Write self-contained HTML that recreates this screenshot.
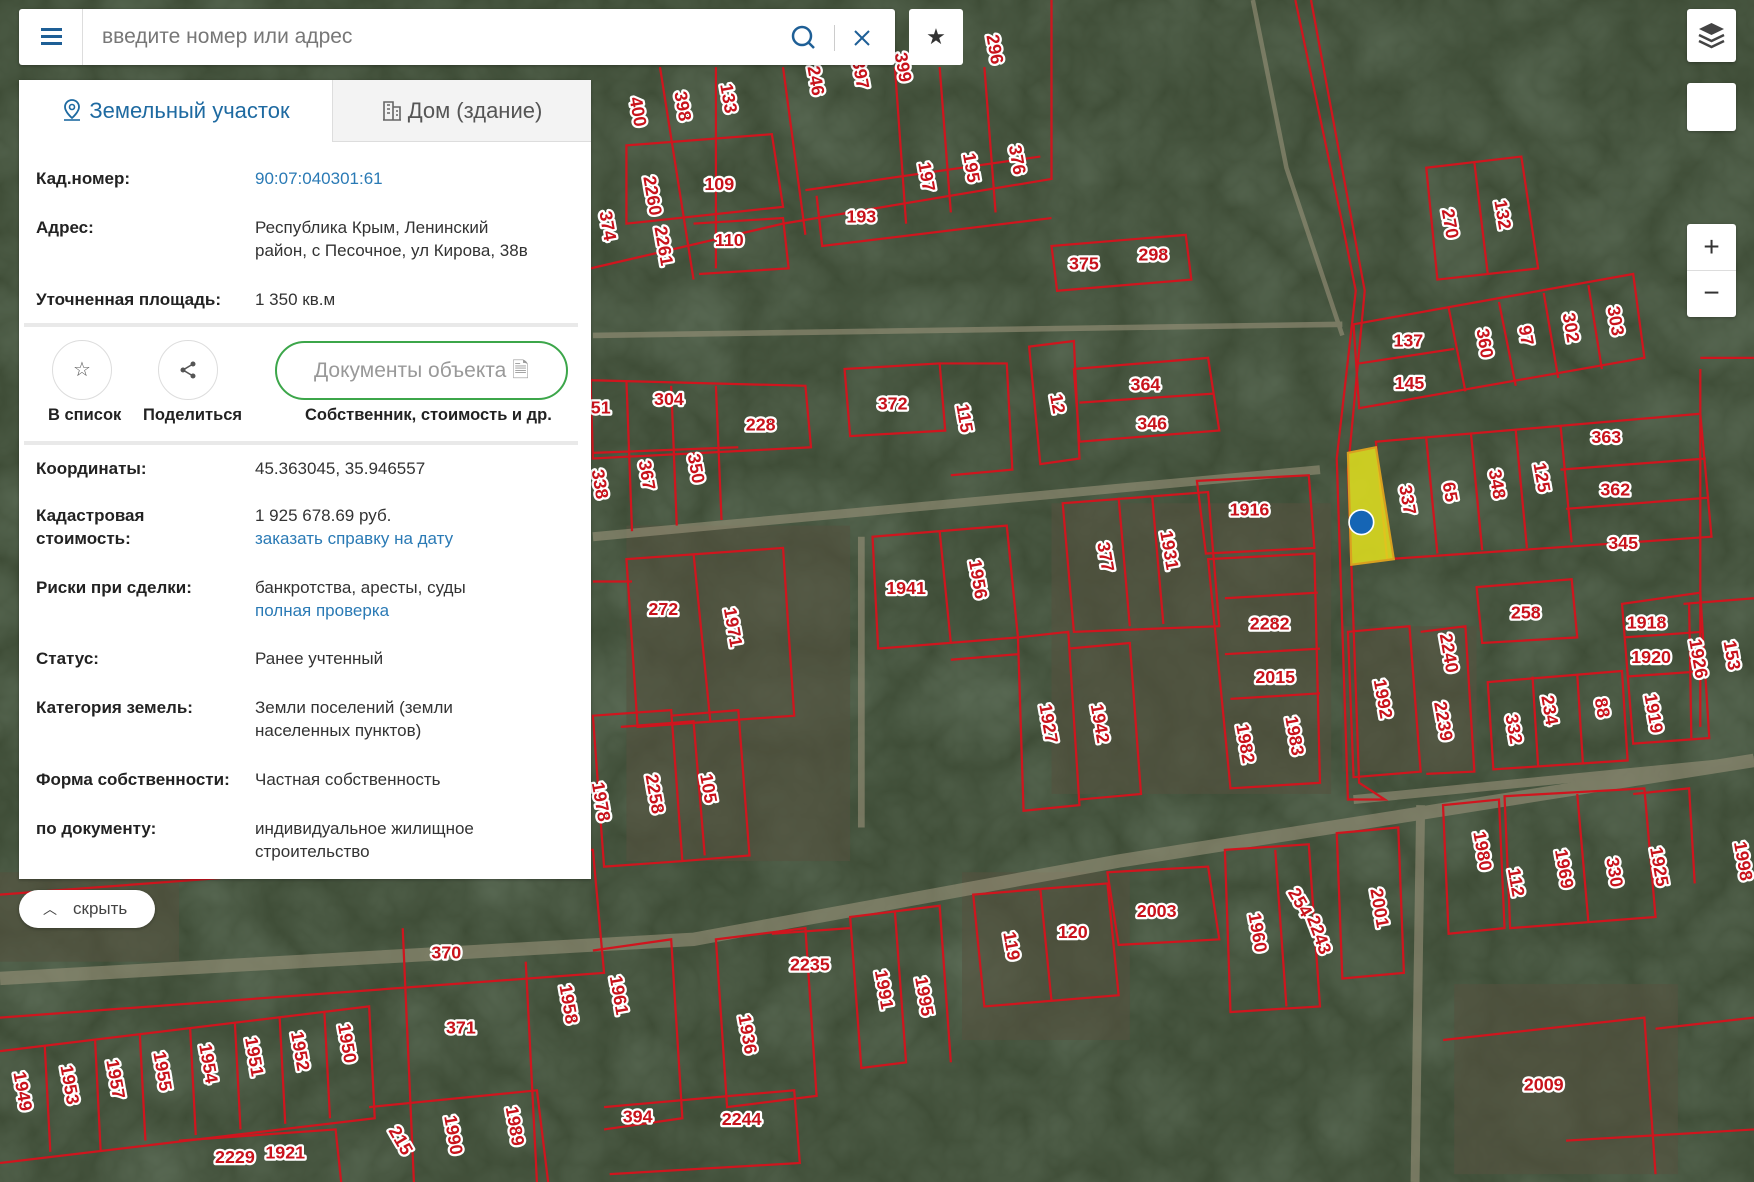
<!DOCTYPE html>
<html><head><meta charset="utf-8"><style>
*{margin:0;padding:0;box-sizing:border-box}
body{width:1754px;height:1182px;overflow:hidden;position:relative;background:#3b4a33;font-family:"Liberation Sans Narrow","Liberation Sans",sans-serif;}
svg.map{position:absolute;left:0;top:0}
.bar{position:absolute;left:19px;top:9px;width:876px;height:56px;background:#fff;border-radius:3px;box-shadow:0 1px 3px rgba(0,0,0,.3)}
.ham{position:absolute;left:0;top:0;width:64px;height:56px;border-right:1px solid #ddd}
.ham i{position:absolute;left:22px;width:21px;height:3px;background:#1e5f96}
.ph{position:absolute;left:83px;top:16px;font-size:21px;color:#777}
.star{position:absolute;left:909px;top:9px;width:54px;height:56px;background:#fff;border-radius:3px;font-size:22px;color:#333;text-align:center;line-height:56px}
.panel{position:absolute;left:19px;top:80px;width:572px;height:799px;background:#fff;box-shadow:0 1px 3px rgba(0,0,0,.3)}
.tab1{position:absolute;left:0;top:0;width:313px;height:62px;color:#1e6aa1;font-size:22px;text-align:center;line-height:62px}
.tab2{position:absolute;left:313px;top:0;width:259px;height:62px;background:#f3f3f3;border-left:1px solid #ddd;border-bottom:1px solid #ddd;color:#555;font-size:22px;text-align:center;line-height:62px}
.lb{position:absolute;left:17px;font-size:17px;color:#222;font-weight:bold;line-height:23px}
.vl{position:absolute;left:236px;font-size:17px;color:#333;line-height:23px}
.lnk{color:#2a7ab5}
.sep{position:absolute;left:5px;width:554px;height:4px;background:#e9e9e9}
.circ{position:absolute;width:60px;height:60px;border:1px solid #ddd;border-radius:50%;top:260px;text-align:center;line-height:58px;color:#555;font-size:20px}
.cap{position:absolute;top:326px;font-size:16.5px;font-weight:bold;color:#222}
.doc{position:absolute;left:256px;top:261px;width:293px;height:59px;border:2px solid #3ca64a;border-radius:30px;font-size:21px;color:#999;text-align:center;line-height:55px}
.hide{position:absolute;left:19px;top:890px;width:136px;height:38px;background:#fff;border-radius:19px;font-size:17px;color:#444;line-height:38px;padding-left:54px;box-shadow:0 1px 3px rgba(0,0,0,.3)}
.rb{position:absolute;left:1687px;width:49px;background:#fff;border-radius:3px;box-shadow:0 1px 3px rgba(0,0,0,.3)}
</style></head><body>
<svg class="map" width="1754" height="1182" viewBox="0 0 1568 1057" preserveAspectRatio="none">
<defs><filter id="n"><feTurbulence baseFrequency="0.012" numOctaves="4" seed="5"/><feColorMatrix values="0 0 0 0 0.16  0 0 0 0 0.22  0 0 0 0 0.15  0 0 0 0.6 0"/></filter></defs>
<rect width="1568" height="1057" fill="#3e4c36"/>
<rect width="1568" height="1057" filter="url(#n)"/>
<g fill="#55523f" opacity=".6">
<rect x="560" y="470" width="200" height="300"/><rect x="940" y="450" width="250" height="260"/><rect x="1200" y="560" width="120" height="130"/><rect x="860" y="780" width="150" height="150"/><rect x="0" y="780" width="160" height="80"/><rect x="1300" y="880" width="200" height="170"/></g>
<g stroke="#9a927a" fill="none" opacity=".6">
<path d="M530 480 L1180 420" stroke-width="8"/>
<path d="M0 875 L620 840 L1000 770 L1568 680" stroke-width="12"/>
<path d="M1270 720 L1265 1057" stroke-width="8"/>
<path d="M770 480 L770 740" stroke-width="6"/>
<path d="M530 300 L1200 290" stroke-width="5"/>
<path d="M1120 0 L1150 150 L1200 300" stroke-width="4"/>
<path d="M1210 715 L1568 680" stroke-width="8"/>
</g>
<g stroke="#d0151e" stroke-width="2" fill="none">
<path d="M1158 0 L1200 200 L1212 260 L1195 410 L1205 715 L1238 715 L1215 700 L1205 420 L1220 260 L1172 0"/>
<path d="M528 240 L700 200 L940 160 L940 0 M590 60 L620 250 M640 60 L640 240 M700 60 L720 210 M720 170 L930 140 M800 60 L810 200 M840 60 L850 190 M880 60 L890 190 M730 175 L735 220 L940 195"/>
<path d="M560 130 L690 120 L700 185 L560 200 Z M620 200 L700 195 L705 240 L625 245"/>
<path d="M940 220 L1060 210 L1065 250 L945 260 Z"/>
<path d="M1275 150 L1360 140 L1375 240 L1285 250 Z M1318 145 L1330 245"/>
<path d="M1210 290 L1460 245 L1470 320 L1215 365 Z M1295 275 L1310 350 M1340 270 L1355 345 M1380 262 L1393 338 M1420 255 L1432 330 M1215 325 L1300 312"/>
<path d="M528 340 L720 345 L725 400 L530 410 Z M560 340 L565 475 M600 345 L605 470 M640 345 L645 465 M530 405 L660 400"/>
<path d="M755 330 L840 325 L845 385 L760 390 Z M840 325 L900 325 L905 420 L850 425"/>
<path d="M920 310 L960 305 L965 410 L930 415 Z M960 330 L1080 320 L1090 385 L965 395 Z M965 360 L1085 352"/>
<path d="M1230 395 L1520 370 L1530 480 L1240 500 Z M1275 392 L1285 495 M1315 388 L1325 492 M1355 385 L1365 490 M1395 380 L1405 485 M1395 420 L1525 410 M1400 455 L1528 445 M1520 320 L1568 320 M1520 330 L1520 650"/>
<path d="M1320 525 L1405 518 L1410 570 L1325 575 Z M1450 540 L1520 530 L1528 660 L1460 665 Z M1452 570 L1522 565 M1455 605 L1525 600 M1505 540 L1568 535 M1510 540 L1512 660"/>
<path d="M1205 565 L1260 560 L1270 690 L1210 695 Z M1270 565 L1310 560 L1318 690 L1275 692 M1330 610 L1450 600 L1455 680 L1335 688 Z M1370 605 L1375 685 M1410 603 L1415 682"/>
<path d="M780 480 L900 470 L910 570 L785 580 Z M840 475 L850 575 M950 450 L1080 440 L1090 560 L960 565 Z M1000 445 L1010 560 M1030 444 L1040 558 M1070 430 L1170 425 L1175 490 L1078 495 Z M1080 500 L1175 495 L1180 700 L1100 705 Z M1095 535 L1178 530 M1095 585 L1180 580 M1100 625 L1180 620"/>
<path d="M560 500 L700 490 L710 640 L570 650 Z M620 495 L635 645 M530 520 L565 520"/>
<path d="M910 570 L955 565 L965 720 L915 725 Z M955 580 L1010 575 L1020 710 L965 715 M850 590 L910 585"/>
<path d="M530 640 L600 635 L610 770 L540 775 Z M555 650 L620 645 L630 765 M600 640 L660 635 L670 765 L610 770"/>
<path d="M0 800 L530 760 L540 870 L0 910 M360 830 L370 1057 M470 860 L480 1057 M530 850 L600 840 L610 1000 L540 1010"/>
<path d="M0 940 L330 900 L335 1000 L0 1040 M40 935 L45 1030 M85 930 L90 1030 M125 925 L130 1020 M170 920 L175 1015 M210 915 L215 1010 M250 910 L255 1005 M290 905 L295 1000"/>
<path d="M640 840 L720 830 L730 980 L650 990 Z M690 835 L760 830 M760 820 L800 815 L810 950 L770 955 Z M800 815 L840 810 L850 950 M870 800 L990 790 L1000 890 L880 900 Z M930 795 L940 895 M990 780 L1080 775 L1090 840 L1000 845 Z"/>
<path d="M1095 760 L1170 755 L1180 900 L1100 905 Z M1140 760 L1150 900 M1195 745 L1250 740 L1255 870 L1200 875 Z M1290 720 L1340 715 L1345 830 L1295 835 Z M1345 712 L1470 705 L1480 820 L1350 830 Z M1410 710 L1420 825 M1460 710 L1510 705 L1515 790"/>
<path d="M1480 920 L1568 910 M1290 930 L1470 910 L1480 1050 M1400 1020 L1568 1010"/>
<path d="M160 1020 L300 1010 L305 1057 M330 990 L480 975 L490 1057 M540 990 L710 975 L715 1040 L545 1050"/>
</g>
<polygon points="1205,405 1230,400 1246,500 1208,505" fill="#e3e21f" fill-opacity=".85" stroke="#d9a020" stroke-width="2"/>
<circle cx="1217" cy="467" r="11" fill="#1565b5" stroke="#fff" stroke-width="1.5"/>
<g font-family="Liberation Sans Narrow,Liberation Sans,sans-serif" font-size="16" font-weight="bold" fill="#c8121b" stroke="#fff" stroke-width="4" paint-order="stroke" text-anchor="middle" stroke-linejoin="round">
<text x="610" y="100" transform="rotate(80 610 95)">398</text><text x="651" y="93" transform="rotate(80 651 88)">133</text><text x="570" y="105" transform="rotate(80 570 100)">400</text><text x="730" y="78" transform="rotate(80 730 72)">246</text><text x="770" y="72" transform="rotate(80 770 66)">397</text><text x="808" y="66" transform="rotate(80 808 60)">399</text><text x="890" y="50" transform="rotate(80 890 44)">296</text>
<text x="643" y="170">109</text><text x="652" y="220">110</text><text x="583" y="180" transform="rotate(80 583 175)">2260</text><text x="593" y="225" transform="rotate(80 593 220)">2261</text><text x="543" y="207" transform="rotate(80 543 202)">374</text>
<text x="828" y="163" transform="rotate(80 828 158)">197</text><text x="868" y="155" transform="rotate(80 868 150)">195</text><text x="909" y="148" transform="rotate(80 909 143)">376</text><text x="770" y="199">193</text><text x="969" y="241">375</text><text x="1031" y="233">298</text>
<text x="1296" y="205" transform="rotate(80 1296 200)">270</text><text x="1343" y="197" transform="rotate(80 1343 192)">132</text><text x="1259" y="310">137</text><text x="1260" y="348">145</text><text x="1327" y="312" transform="rotate(80 1327 307)">360</text><text x="1364" y="305" transform="rotate(80 1364 300)">97</text><text x="1404" y="298" transform="rotate(80 1404 293)">302</text><text x="1444" y="292" transform="rotate(80 1444 287)">303</text>
<text x="537" y="370">51</text><text x="598" y="362">304</text><text x="680" y="385">228</text><text x="798" y="366">372</text><text x="862" y="379" transform="rotate(80 862 374)">115</text><text x="945" y="366" transform="rotate(80 945 361)">12</text><text x="1024" y="349">364</text><text x="1030" y="384">346</text>
<text x="536" y="438" transform="rotate(80 536 433)">338</text><text x="578" y="430" transform="rotate(80 578 425)">367</text><text x="622" y="424" transform="rotate(80 622 419)">350</text>
<text x="1436" y="396">363</text><text x="1444" y="443">362</text><text x="1451" y="491">345</text><text x="1258" y="452" transform="rotate(80 1258 447)">337</text><text x="1296" y="445" transform="rotate(80 1296 440)">65</text><text x="1338" y="438" transform="rotate(80 1338 433)">348</text><text x="1378" y="432" transform="rotate(80 1378 427)">125</text>
<text x="1117" y="461">1916</text><text x="988" y="503" transform="rotate(80 988 498)">377</text><text x="1045" y="497" transform="rotate(80 1045 492)">1931</text><text x="810" y="531">1941</text><text x="874" y="523" transform="rotate(80 874 518)">1956</text><text x="593" y="550">272</text><text x="655" y="566" transform="rotate(80 655 561)">1971</text>
<text x="1135" y="563">2282</text><text x="1140" y="611">2015</text><text x="1364" y="553">258</text><text x="1472" y="562">1918</text><text x="1476" y="593">1920</text><text x="1295" y="589" transform="rotate(80 1295 584)">2240</text><text x="1518" y="594" transform="rotate(80 1518 589)">1926</text><text x="1548" y="591" transform="rotate(80 1548 586)">153</text>
<text x="937" y="652" transform="rotate(80 937 647)">1927</text><text x="983" y="652" transform="rotate(80 983 647)">1942</text><text x="1113" y="670" transform="rotate(80 1113 665)">1982</text><text x="1157" y="663" transform="rotate(80 1157 658)">1983</text><text x="1236" y="630" transform="rotate(80 1236 625)">1992</text><text x="1290" y="650" transform="rotate(80 1290 645)">2239</text><text x="1353" y="657" transform="rotate(80 1353 652)">332</text><text x="1385" y="640" transform="rotate(80 1385 635)">234</text><text x="1432" y="638" transform="rotate(80 1432 633)">88</text><text x="1478" y="643" transform="rotate(80 1478 638)">1919</text>
<text x="537" y="722" transform="rotate(80 537 717)">1978</text><text x="585" y="715" transform="rotate(80 585 710)">2258</text><text x="633" y="710" transform="rotate(80 633 705)">105</text>
<text x="1325" y="766" transform="rotate(80 1325 761)">1980</text><text x="1355" y="794" transform="rotate(80 1355 789)">112</text><text x="1398" y="782" transform="rotate(80 1398 777)">1969</text><text x="1443" y="785" transform="rotate(80 1443 780)">330</text><text x="1483" y="780" transform="rotate(80 1483 775)">1925</text><text x="1558" y="775" transform="rotate(80 1558 770)">1998</text>
<text x="1034" y="820">2003</text><text x="959" y="839">120</text><text x="904" y="851" transform="rotate(80 904 846)">119</text><text x="1124" y="839" transform="rotate(80 1124 834)">1960</text><text x="1162" y="812" transform="rotate(60 1162 807)">254</text><text x="1179" y="841" transform="rotate(70 1179 836)">2243</text><text x="1233" y="817" transform="rotate(80 1233 812)">2001</text>
<text x="399" y="857">370</text><text x="724" y="868">2235</text><text x="790" y="890" transform="rotate(80 790 885)">1991</text><text x="826" y="896" transform="rotate(80 826 891)">1995</text><text x="412" y="924">371</text><text x="508" y="903" transform="rotate(80 508 898)">1958</text><text x="553" y="895" transform="rotate(80 553 890)">1961</text><text x="668" y="930" transform="rotate(80 668 925)">1936</text>
<text x="20" y="981" transform="rotate(80 20 976)">1949</text><text x="62" y="975" transform="rotate(80 62 970)">1953</text><text x="103" y="970" transform="rotate(80 103 965)">1957</text><text x="145" y="963" transform="rotate(80 145 958)">1955</text><text x="186" y="956" transform="rotate(80 186 951)">1954</text><text x="227" y="950" transform="rotate(80 227 945)">1951</text><text x="268" y="945" transform="rotate(80 268 940)">1952</text><text x="310" y="938" transform="rotate(80 310 933)">1950</text>
<text x="1380" y="975">2009</text><text x="570" y="1004">394</text><text x="663" y="1006">2244</text><text x="210" y="1040">2229</text><text x="255" y="1036">1921</text><text x="358" y="1025" transform="rotate(60 358 1020)">215</text><text x="405" y="1020" transform="rotate(80 405 1015)">1990</text><text x="460" y="1012" transform="rotate(80 460 1007)">1989</text>
</g>
</svg>

<div class="bar"><div class="ham"><i style="top:19px"></i><i style="top:26px"></i><i style="top:33px"></i></div>
<div class="ph">введите номер или адрес</div>
<svg style="position:absolute;left:772px;top:16px" width="26" height="26" viewBox="0 0 26 26"><circle cx="11" cy="11" r="9" fill="none" stroke="#1e5f96" stroke-width="2.5"/><path d="M17 17 L23 23" stroke="#1e5f96" stroke-width="2.5"/></svg>
<div style="position:absolute;left:815px;top:16px;width:1px;height:26px;background:#ccc"></div>
<svg style="position:absolute;left:834px;top:20px" width="18" height="18"><path d="M2 2 L16 16 M16 2 L2 16" stroke="#1e5f96" stroke-width="2"/></svg>
</div>
<div class="star">★</div>

<div class="panel">
<div class="tab1"><svg width="22" height="24" viewBox="0 0 22 24" style="vertical-align:-4px;margin-right:6px"><path d="M11 2a7 7 0 0 0-7 7c0 5 7 11 7 11s7-6 7-11a7 7 0 0 0-7-7z" fill="none" stroke="#1e6aa1" stroke-width="1.8"/><circle cx="11" cy="9" r="2.5" fill="none" stroke="#1e6aa1" stroke-width="1.6"/><path d="M3 22h16" stroke="#1e6aa1" stroke-width="1.6"/></svg>Земельный участок</div>
<div class="tab2"><svg width="20" height="22" viewBox="0 0 20 22" style="vertical-align:-3px;margin-right:6px"><path d="M2 21V3h9v18M11 8h7v13M1 21h18M5 6h3M5 10h3M5 14h3M14 12h2M14 16h2" stroke="#666" stroke-width="1.6" fill="none"/></svg>Дом (здание)</div>
<div class="lb" style="top:87px">Кад.номер:</div><div class="vl lnk" style="top:87px">90:07:040301:61</div>
<div class="lb" style="top:136px">Адрес:</div><div class="vl" style="top:136px">Республика Крым, Ленинский<br>район, с Песочное, ул Кирова, 38в</div>
<div class="lb" style="top:208px">Уточненная площадь:</div><div class="vl" style="top:208px">1 350 кв.м</div>
<div class="sep" style="top:243px"></div>
<div class="circ" style="left:33px">☆</div><div class="circ" style="left:139px"><svg width="22" height="22" viewBox="0 0 22 22" style="margin-top:18px"><circle cx="16" cy="5" r="2.5" fill="#555"/><circle cx="16" cy="17" r="2.5" fill="#555"/><circle cx="6" cy="11" r="2.5" fill="#555"/><path d="M16 5 L6 11 L16 17" stroke="#555" stroke-width="1.6" fill="none"/></svg></div>
<div class="cap" style="left:29px">В список</div><div class="cap" style="left:124px">Поделиться</div>
<div class="doc">Документы объекта 🗎</div>
<div class="cap" style="left:286px">Собственник, стоимость и др.</div>
<div class="sep" style="top:361px"></div>
<div class="lb" style="top:377px">Координаты:</div><div class="vl" style="top:377px">45.363045, 35.946557</div>
<div class="lb" style="top:424px">Кадастровая<br>стоимость:</div><div class="vl" style="top:424px">1 925 678.69 руб.<br><span class="lnk">заказать справку на дату</span></div>
<div class="lb" style="top:496px">Риски при сделки:</div><div class="vl" style="top:496px">банкротства, аресты, суды<br><span class="lnk">полная проверка</span></div>
<div class="lb" style="top:567px">Статус:</div><div class="vl" style="top:567px">Ранее учтенный</div>
<div class="lb" style="top:616px">Категория земель:</div><div class="vl" style="top:616px">Земли поселений (земли<br>населенных пунктов)</div>
<div class="lb" style="top:688px">Форма собственности:</div><div class="vl" style="top:688px">Частная собственность</div>
<div class="lb" style="top:737px">по документу:</div><div class="vl" style="top:737px">индивидуальное жилищное<br>строительство</div>
</div>
<div class="hide"><span style="position:absolute;left:24px;top:0;font-size:14px">︿</span>скрыть</div>

<div class="rb" style="top:9px;height:53px"><svg width="49" height="53" viewBox="0 0 49 53"><path d="M12 20 L24.5 14 L37 20 L24.5 26 Z" fill="#444"/><path d="M12 26 L24.5 32 L37 26 M12 32 L24.5 38 L37 32" stroke="#444" stroke-width="2.5" fill="none"/></svg></div>
<div class="rb" style="top:83px;height:48px"></div>
<div class="rb" style="top:224px;height:93px"><div style="text-align:center;font-size:28px;line-height:46px;color:#333;border-bottom:1px solid #ddd">+</div><div style="text-align:center;font-size:28px;line-height:44px;color:#333">−</div></div>
</body></html>
